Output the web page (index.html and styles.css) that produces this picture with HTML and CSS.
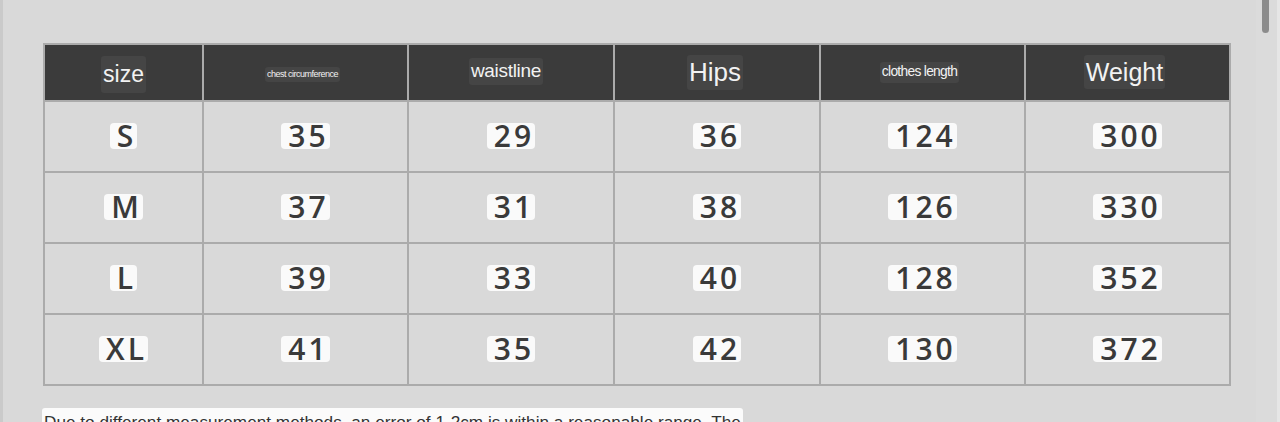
FILE: index.html
```html
<!DOCTYPE html>
<html>
<head>
<meta charset="utf-8">
<link rel="stylesheet" href="styles.css">
</head>
<body>
<div class="page">
  <main class="content">
    <table class="sizes">
      <colgroup>
        <col class="c-size"><col class="c-w1"><col class="c-w2"><col class="c-w2"><col class="c-w1"><col class="c-w1">
      </colgroup>
      <thead>
        <tr>
          <th><span class="hl h-size">size</span></th>
          <th><span class="hl h-chest">chest circumference</span></th>
          <th><span class="hl h-waist">waistline</span></th>
          <th><span class="hl h-hips">Hips</span></th>
          <th><span class="hl h-length">clothes length</span></th>
          <th><span class="hl h-weight">Weight</span></th>
        </tr>
      </thead>
      <tbody>
        <tr><td><span class="v">S</span></td><td><span class="v">35</span></td><td><span class="v">29</span></td><td><span class="v">36</span></td><td><span class="v">124</span></td><td><span class="v">300</span></td></tr>
        <tr><td><span class="v">M</span></td><td><span class="v">37</span></td><td><span class="v">31</span></td><td><span class="v">38</span></td><td><span class="v">126</span></td><td><span class="v">330</span></td></tr>
        <tr><td><span class="v">L</span></td><td><span class="v">39</span></td><td><span class="v">33</span></td><td><span class="v">40</span></td><td><span class="v">128</span></td><td><span class="v">352</span></td></tr>
        <tr><td><span class="v">XL</span></td><td><span class="v">41</span></td><td><span class="v">35</span></td><td><span class="v">42</span></td><td><span class="v">130</span></td><td><span class="v">372</span></td></tr>
      </tbody>
    </table>
    <p class="note"><span class="note-text">Due to different measurement methods, an error of 1-2cm is within a reasonable range. The</span></p>
  </main>
  <div class="scrolltrack"><div class="thumb"></div></div>
</div>
</body>
</html>
```

FILE: styles.css
```css
html, body {
  margin: 0;
  padding: 0;
  height: 100%;
  overflow: hidden;
}
body {
  background: #d9d9d9;
  font-family: "Liberation Sans", Arial, sans-serif;
}
.page {
  display: flex;
  height: 422px;
  border-left: 3px solid #cacaca;
  box-sizing: border-box;
}
.content {
  flex: 1;
  padding: 43px 0 0 40px;
}
.sizes {
  width: 1188px;
  table-layout: fixed;
  border-collapse: collapse;
}
.c-size { width: 159px; }
.c-w1 { width: 205px; }
.c-w2 { width: 206px; }
.sizes th, .sizes td {
  border: 2px solid #ababab;
  text-align: center;
  vertical-align: middle;
  padding: 0;
}
.sizes thead tr { height: 57px; }
.sizes th {
  background: #3b3b3b;
  color: #f2f2f2;
  font-weight: normal;
}
.hl {
  display: inline-block;
  background: #454545;
  border-radius: 3px;
  padding: 2px 2px;
  line-height: 1.2;
}
.h-size { font-size: 23px; padding: 5px 2px 5px; margin-top: 4px; }
.h-chest { font-size: 9px; letter-spacing: -0.5px; margin-right: 6px; }
.h-waist { font-size: 19px; letter-spacing: -0.3px; margin-right: 10px; margin-bottom: 2px; }
.h-hips { font-size: 26px; margin-right: 4px; }
.h-length { font-size: 13.8px; letter-spacing: -0.7px; margin-right: 6px; }
.h-weight { font-size: 25px; margin-right: 6px; margin-bottom: 2px; }
.sizes tbody tr { height: 71px; }
.sizes td { background: #d9d9d9; }
.v {
  display: inline-block;
  background: #fafafa;
  border-radius: 4px;
  font-family: "Open Sans", "Noto Sans", sans-serif;
  font-weight: 600;
  font-size: 30px;
  letter-spacing: 3px;
  color: #3a3a3a;
  line-height: 26px;
  padding: 0 1px 0 7px;
}
.note {
  margin: 22px 0 0 -1px;
}
.note-text {
  display: inline-block;
  background: #fbfbfb;
  border-radius: 3px;
  color: #333;
  font-size: 17.2px;
  line-height: 22px;
  padding: 3px 2px 0 2px;
}
.scrolltrack {
  width: 24px;
  flex: none;
  background: #dbdbdb;
  border-right: 3px solid #e6e6e6;
  box-sizing: border-box;
  padding-left: 6px;
}
.thumb {
  width: 7px;
  height: 33px;
  background: #8c8c8c;
  border-radius: 0 0 4px 4px;
}
```
